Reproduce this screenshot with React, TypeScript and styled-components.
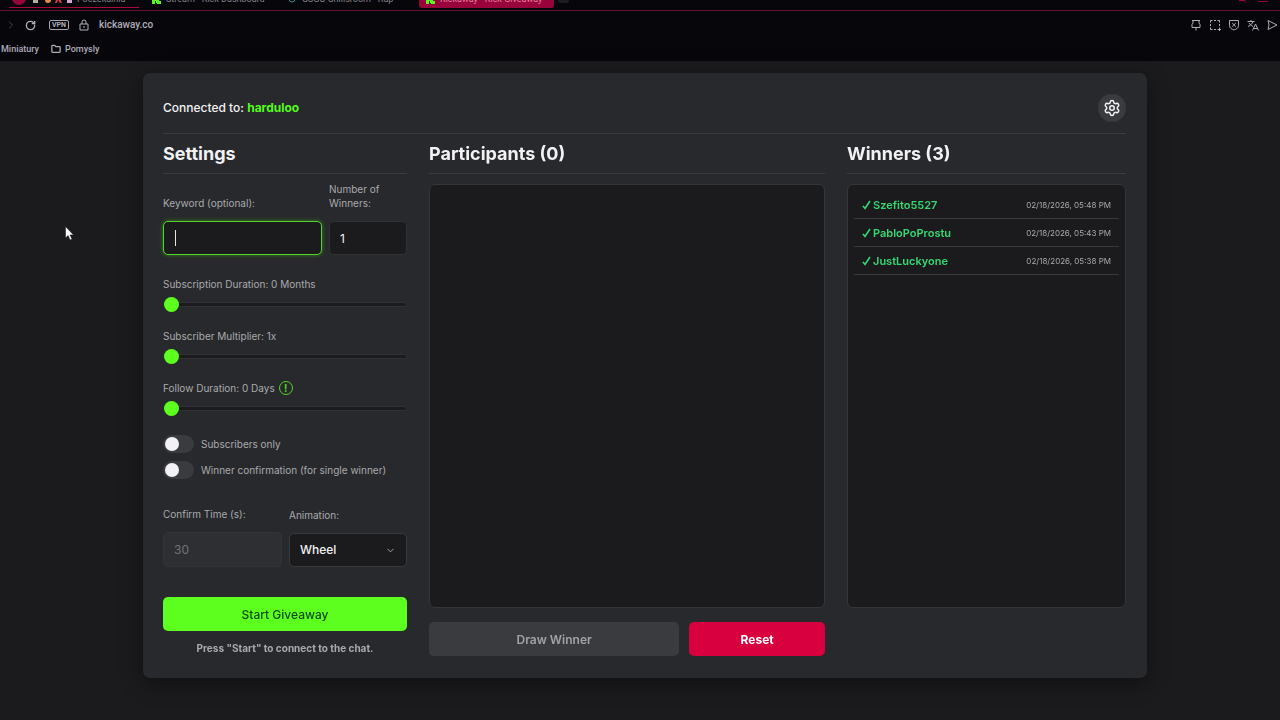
import React from "react";
import styled, { createGlobalStyle } from "styled-components";
import { Settings, ChevronDown, RotateCw, ChevronRight, Folder } from "lucide-react";

const Global = createGlobalStyle`
  * { box-sizing: border-box; }
  html { background: #1b1b1d; }
  body { margin: 0; font-family: Inter, "Liberation Sans", sans-serif; color: #f2f2f4; }
  button, input, select { font: inherit; color: inherit; }
  h2, p, ul { margin: 0; padding: 0; }
`;

const Browser = styled.header`
  height: 62px;
  background: #06060b;
  border-bottom: 1px solid #1c1820;
  font-family: Roboto, sans-serif;
  color: #b0acb8;
`;

const TabStrip = styled.nav`
  height: 11px;
  display: flex;
  padding-left: 9px;
  border-bottom: 1px solid #6b1030;
  overflow: hidden;
`;

const Tab = styled.a<{ $width: number; $kind?: "current" | "group" }>`
  display: flex;
  align-items: center;
  gap: 5px;
  flex: 0 0 ${(p) => p.$width}px;
  height: 22px;
  margin-top: -14px;
  margin-right: ${(p) => (p.$kind === "group" ? 6 : 0)}px;
  padding: 4px 6px 0 ${(p) => (p.$kind === "group" ? 2 : 7)}px;
  overflow: hidden;
  white-space: nowrap;
  font-size: 9px;
  line-height: 16px;
  text-decoration: none;
  border-radius: ${(p) => (p.$kind === "current" ? "0 0 3px 3px" : "0")};
  color: ${(p) => (p.$kind === "current" ? "#e8809c" : "#85828c")};
  background: ${(p) => (p.$kind === "current" ? "#98033b" : "transparent")};
  border-bottom: 1px solid ${(p) => (p.$kind === "group" ? "#a80c3c" : "transparent")};
`;

const NewTab = styled.button`
  width: 11px;
  height: 16px;
  margin: -13px auto 0 4px;
  padding: 0;
  border: 0;
  border-radius: 2px;
  background: #1c1b21;
`;

const WindowButtons = styled.svg`
  flex: none;
  margin-right: 8px;
`;

const AddressBar = styled.div`
  height: 28px;
  display: flex;
  align-items: center;
  padding: 0 2px 0 5px;
`;

const IconButton = styled.button<{ $gap?: number }>`
  display: flex;
  padding: 0;
  margin-right: ${(p) => p.$gap ?? 0}px;
  border: 0;
  background: none;
  color: inherit;
`;

const Vpn = styled.span`
  width: 20px;
  height: 10px;
  margin-right: 10px;
  border: 1px solid #aaa6b2;
  border-radius: 2px;
  font-size: 7px;
  font-weight: 700;
  line-height: 8px;
  text-align: center;
`;

const Address = styled.span`
  flex: 1;
  margin-left: 10px;
  font-size: 10px;
  font-weight: 500;
  line-height: 16px;
`;

const Tools = styled.div`
  display: flex;
  gap: 7px;
`;

const Bookmarks = styled.nav`
  display: flex;
  gap: 12px;
  height: 20px;
  padding-left: 1px;
`;

const Bookmark = styled.a`
  display: flex;
  align-items: center;
  gap: 4px;
  font-size: 9px;
  font-weight: 500;
  line-height: 20px;
  color: inherit;
  text-decoration: none;
`;

const Page = styled.main`
  padding: 11px 133px 42px 143px;
`;

const Card = styled.section`
  padding: 20px 21px 22px 20px;
  border-radius: 7px;
  background: #28292c;
  box-shadow: 0 6px 22px rgba(0, 0, 0, 0.4);
`;

const CardHeader = styled.div`
  display: flex;
  align-items: center;
  justify-content: space-between;
  height: 41px;
  padding-bottom: 11px;
  border-bottom: 1px solid #3b3c40;
  font-size: 12px;
  font-weight: 500;
`;

const Channel = styled.strong`
  color: #53fc18;
  font-weight: 700;
`;

const Gear = styled.button`
  display: grid;
  place-items: center;
  width: 28px;
  height: 28px;
  padding: 0;
  border: 0;
  border-radius: 50%;
  background: #3a3b3e;
`;

const Columns = styled.div`
  display: grid;
  grid-template-columns: 244fr 396fr 279fr;
  gap: 22px;
`;

const Column = styled.section`
  display: flex;
  flex-direction: column;
  min-width: 0;
`;

const Title = styled.h2`
  height: 40px;
  margin-bottom: 8px;
  border-bottom: 1px solid #3b3c40;
  font-size: 18px;
  line-height: 40px;
  font-weight: 700;
  color: #f2f2f4;
`;

const FieldRow = styled.div<{ $columns: string }>`
  display: grid;
  grid-template-columns: ${(p) => p.$columns};
  align-items: end;
  gap: 7px;
`;

const Field = styled.label`
  display: flex;
  flex-direction: column;
  gap: 11px;
  font-size: 10px;
  line-height: 14px;
  color: #a9a9ac;
`;

const TextInput = styled.input`
  width: 100%;
  height: 34px;
  padding: 0 10px;
  border: 1px solid #303134;
  border-radius: 5px;
  background: #1b1b1d;
  color: #f2f2f4;
  font-size: 12px;
  outline: none;
  &:focus {
    border-color: #53d62a;
    box-shadow: 0 0 4px rgba(83, 252, 24, 0.4);
    caret-color: transparent;
  }
  &:disabled {
    height: 35px;
    background: #2e2f32;
    border-color: #323336;
    color: #727376;
  }
`;

const KeywordBox = styled.span`
  display: grid;
  align-items: center;
  & > * { grid-area: 1 / 1; }
`;

const Caret = styled.span`
  width: 1px;
  height: 16px;
  margin-left: 12px;
  background: #e4e4e6;
  pointer-events: none;
`;

const Sliders = styled.div`
  display: flex;
  flex-direction: column;
  gap: 16px;
  margin: 21px 0 19px;
`;

const SliderField = styled.label`
  display: flex;
  flex-direction: column;
  gap: 4px;
  font-size: 10px;
  color: #a9a9ac;
`;

const SliderLabel = styled.span`
  display: flex;
  align-items: center;
  gap: 4px;
  height: 16px;
`;

const Range = styled.input`
  appearance: none;
  width: 100%;
  height: 16px;
  margin: 0;
  background: none;
  &::-webkit-slider-runnable-track {
    height: 5px;
    border: 1px solid #303134;
    border-radius: 3px;
    background: #1b1b1d;
  }
  &::-webkit-slider-thumb {
    appearance: none;
    width: 15px;
    height: 15px;
    margin-top: -6px;
    border-radius: 50%;
    background: #5cff1e;
  }
`;

const Info = styled.button`
  width: 14px;
  height: 14px;
  padding: 0;
  border: 1px solid #53d62a;
  border-radius: 50%;
  background: none;
  color: #53d62a;
  font-size: 10px;
  line-height: 12px;
  font-weight: 700;
`;

const Toggles = styled.div`
  display: flex;
  flex-direction: column;
  gap: 8px;
  margin-bottom: 28px;
`;

const Toggle = styled.label`
  display: flex;
  align-items: center;
  gap: 7px;
  height: 18px;
  font-size: 10px;
  color: #a9a9ac;
`;

const Switch = styled.input`
  appearance: none;
  width: 31px;
  height: 18px;
  margin: 0;
  padding: 2px;
  border-radius: 9px;
  background: #3a3b3e;
  &::before {
    content: "";
    display: block;
    width: 14px;
    height: 14px;
    border-radius: 50%;
    background: #f2f2f6;
  }
  &:checked::before { margin-left: 13px; }
`;

const SelectBox = styled.span`
  display: grid;
  align-items: center;
  & > * { grid-area: 1 / 1; }
  & > svg { justify-self: end; margin-right: 11px; pointer-events: none; }
`;

const Select = styled.select`
  appearance: none;
  width: 100%;
  height: 34px;
  padding: 0 10px;
  border: 1px solid #38393c;
  border-radius: 5px;
  background: #1b1b1d;
  color: #f2f2f4;
  font-size: 12px;
  font-weight: 500;
`;

const Button = styled.button<{ $tone: "go" | "muted" | "danger" }>`
  height: 34px;
  padding: 0;
  border: 0;
  border-radius: 5px;
  font-size: 12px;
  font-weight: ${(p) => ({ go: 500, muted: 600, danger: 700 })[p.$tone]};
  background: ${(p) => ({ go: "#5cff1e", muted: "#3a3b3e", danger: "#d9003f" })[p.$tone]};
  color: ${(p) => ({ go: "#0d4a10", muted: "#a2a2a5", danger: "#ffffff" })[p.$tone]};
`;

const StartArea = styled.div`
  display: flex;
  flex-direction: column;
  gap: 9px;
  margin-top: 30px;
`;

const Hint = styled.p`
  font-size: 10px;
  line-height: 16px;
  font-weight: 700;
  text-align: center;
  color: #a9a9ac;
`;

const Panel = styled.div`
  height: 424px;
  margin-top: 2px;
  padding: 6px;
  border: 1px solid #35363a;
  border-radius: 6px;
  background: #1b1b1d;
`;

const Actions = styled.div`
  display: grid;
  grid-template-columns: 251fr 136fr;
  gap: 10px;
  margin-top: 14px;
`;

const WinnerList = styled.ul`
  list-style: none;
`;

const WinnerRow = styled.li`
  display: flex;
  align-items: center;
  justify-content: space-between;
  height: 28px;
  padding: 0 8px;
  border-bottom: 1px solid #38393c;
`;

const WinnerName = styled.span`
  display: flex;
  align-items: center;
  gap: 2px;
  font-size: 11px;
  font-weight: 600;
  color: #35d873;
`;

const Time = styled.time`
  font-size: 8px;
  color: #a9a9ac;
`;

const Pointer = styled.svg`
  position: absolute;
  left: 65px;
  top: 226px;
`;

const winners = [
  ["Szefito5527", "02/18/2026, 05:48 PM"],
  ["PabloPoProstu", "02/18/2026, 05:43 PM"],
  ["JustLuckyone", "02/18/2026, 05:38 PM"],
];

const sliders = [
  { label: "Subscription Duration: 0 Months", max: 12 },
  { label: "Subscriber Multiplier: 1x", max: 10 },
  { label: "Follow Duration: 0 Days", max: 30, info: true },
];

const toolIcons: [string, React.ReactNode][] = [
  ["Pin", <path d="M2 1.500h8M3 1.500v2.500L2 5.500v3h8v-3L9 4V1.500M6 8.500V11.500" />],
  ["Snapshot", <path d="M1.500 3.500v-2h2M5 1.500h2M8.500 1.500h2v2M10.500 5v2M1.500 5v2M1.500 8.500v2h2M5 10.500h2M8.500 10.500h3.500M10.500 8.500v3.500" />],
  ["Blocker", <path d="M1.500 1.500h9v5c0 2.500-2 3.500-4.500 4.500-2.500-1-4.500-2-4.500-4.500zM4.200 4l3.600 3.600M7.800 4L4.200 7.600" />],
  ["Translate", <path d="M.5 2.500h7M4 1v1.500M6 2.500c-.5 2-2.500 4-5 5M2 4c1 1.500 2 2.500 4 3.500M5.500 11.500L8.500 5l3 6.500M6.500 9.500h4" />],
  ["Send", <path d="M2 1.500L11 6l-9 4.500L3 6z" />],
];

const KickMark = () => (
  <svg width="9" height="10" viewBox="0 0 9 10" fill="#53fc18"><path d="M0 0h3v3h1V1h1V0h4v3H7v1H6v2h1v1h2v3H5V9H4V7H3v3H0z" /></svg>
);

export default function App() {
  return (
    <>
      <Global />
      <Browser>
        <TabStrip>
          <Tab href="#group" $width={130} $kind="group">
            <svg width="61" height="16" viewBox="0 0 61 16">
              <circle cx="8" cy="7" r="7" fill="#98033b" />
              <path d="M22 5h5v7h-5z" fill="#a9b5a4" />
              <circle cx="37" cy="9" r="3" fill="#e0913f" />
              <path d="M44 12l2-7h2l3 7h-2l-2-3-1 3z" fill="#d43a4a" />
              <path d="M56 5h5v7h-5z" fill="#cfa6d6" />
            </svg>
            Poczekalnia
          </Tab>
          <Tab href="#stream" $width={136}><KickMark />Stream - Kick Dashboard</Tab>
          <Tab href="#chat" $width={138}>
            <svg width="9" height="10" viewBox="0 0 9 10" fill="none" stroke="#2f8f8a"><circle cx="4" cy="5" r="3" /></svg>
            CSGO Chillsroom - Rap
          </Tab>
          <Tab href="#giveaway" $width={135} $kind="current"><KickMark />Kickaway - Kick Giveaway</Tab>
          <NewTab aria-label="New tab" />
          <WindowButtons width="34" height="4" viewBox="0 0 34 4" stroke="#98033b" fill="none"><path d="M1 .5h6l1 2M20 1.500h10" /></WindowButtons>
        </TabStrip>
        <AddressBar>
          <IconButton $gap={8} aria-label="Forward"><ChevronRight size={12} color="#48454f" /></IconButton>
          <IconButton $gap={13} aria-label="Reload"><RotateCw size={11} strokeWidth={3} /></IconButton>
          <Vpn>VPN</Vpn>
          <svg width="10" height="12" viewBox="0 0 10 12" fill="none" stroke="currentColor"><path d="M1 5h8v6H1zM3 5V3a2 2 0 0 1 4 0v2M5 7v2" /></svg>
          <Address>kickaway.co</Address>
          <Tools>
            {toolIcons.map(([name, shape]) => (
              <IconButton key={name} aria-label={name}>
                <svg width="12" height="12" viewBox="0 0 12 12" fill="none" stroke="currentColor">{shape}</svg>
              </IconButton>
            ))}
          </Tools>
        </AddressBar>
        <Bookmarks>
          <Bookmark href="#miniatury">Miniatury</Bookmark>
          <Bookmark href="#pomysly"><Folder size={10} strokeWidth={3} />Pomysly</Bookmark>
        </Bookmarks>
      </Browser>
      <Page>
        <Card>
          <CardHeader>
            <span>Connected to: <Channel>harduloo</Channel></span>
            <Gear aria-label="Settings"><Settings size={18} /></Gear>
          </CardHeader>
          <Columns>
            <Column>
              <Title>Settings</Title>
              <FieldRow $columns="159fr 78fr">
                <Field>Keyword (optional):
                  <KeywordBox><TextInput autoFocus /><Caret /></KeywordBox>
                </Field>
                <Field>Number of Winners:<TextInput defaultValue="1" /></Field>
              </FieldRow>
              <Sliders>
                {sliders.map((s) => (
                  <SliderField key={s.label}>
                    <SliderLabel>{s.label}{s.info && <Info aria-label="About follow duration">!</Info>}</SliderLabel>
                    <Range type="range" aria-label={s.label} min={0} max={s.max} defaultValue={0} />
                  </SliderField>
                ))}
              </Sliders>
              <Toggles>
                <Toggle><Switch type="checkbox" />Subscribers only</Toggle>
                <Toggle><Switch type="checkbox" />Winner confirmation (for single winner)</Toggle>
              </Toggles>
              <FieldRow $columns="119fr 118fr">
                <Field>Confirm Time (s):<TextInput disabled defaultValue="30" /></Field>
                <Field>Animation:
                  <SelectBox>
                    <Select><option>Wheel</option></Select>
                    <ChevronDown size={11} />
                  </SelectBox>
                </Field>
              </FieldRow>
              <StartArea>
                <Button $tone="go">Start Giveaway</Button>
                <Hint>Press "Start" to connect to the chat.</Hint>
              </StartArea>
            </Column>
            <Column>
              <Title>Participants (0)</Title>
              <Panel />
              <Actions>
                <Button $tone="muted" disabled>Draw Winner</Button>
                <Button $tone="danger">Reset</Button>
              </Actions>
            </Column>
            <Column>
              <Title>Winners (3)</Title>
              <Panel>
                <WinnerList>
                  {winners.map(([name, time]) => (
                    <WinnerRow key={name}>
                      <WinnerName>
                        <svg width="9" height="10" viewBox="0 0 9 10" fill="none" stroke="currentColor" strokeWidth="1.600"><path d="M1 6l2 2.500L8 1" /></svg>
                        {name}
                      </WinnerName>
                      <Time>{time}</Time>
                    </WinnerRow>
                  ))}
                </WinnerList>
              </Panel>
            </Column>
          </Columns>
        </Card>
      </Page>
      <Pointer width="9" height="15" viewBox="0 0 9 15"><path d="M.5.5v11.500l2.600-2.400 2 4.400 1.900-.9-2-4.200h3.500z" fill="#fff" stroke="#111" strokeWidth=".5" /></Pointer>
    </>
  );
}
